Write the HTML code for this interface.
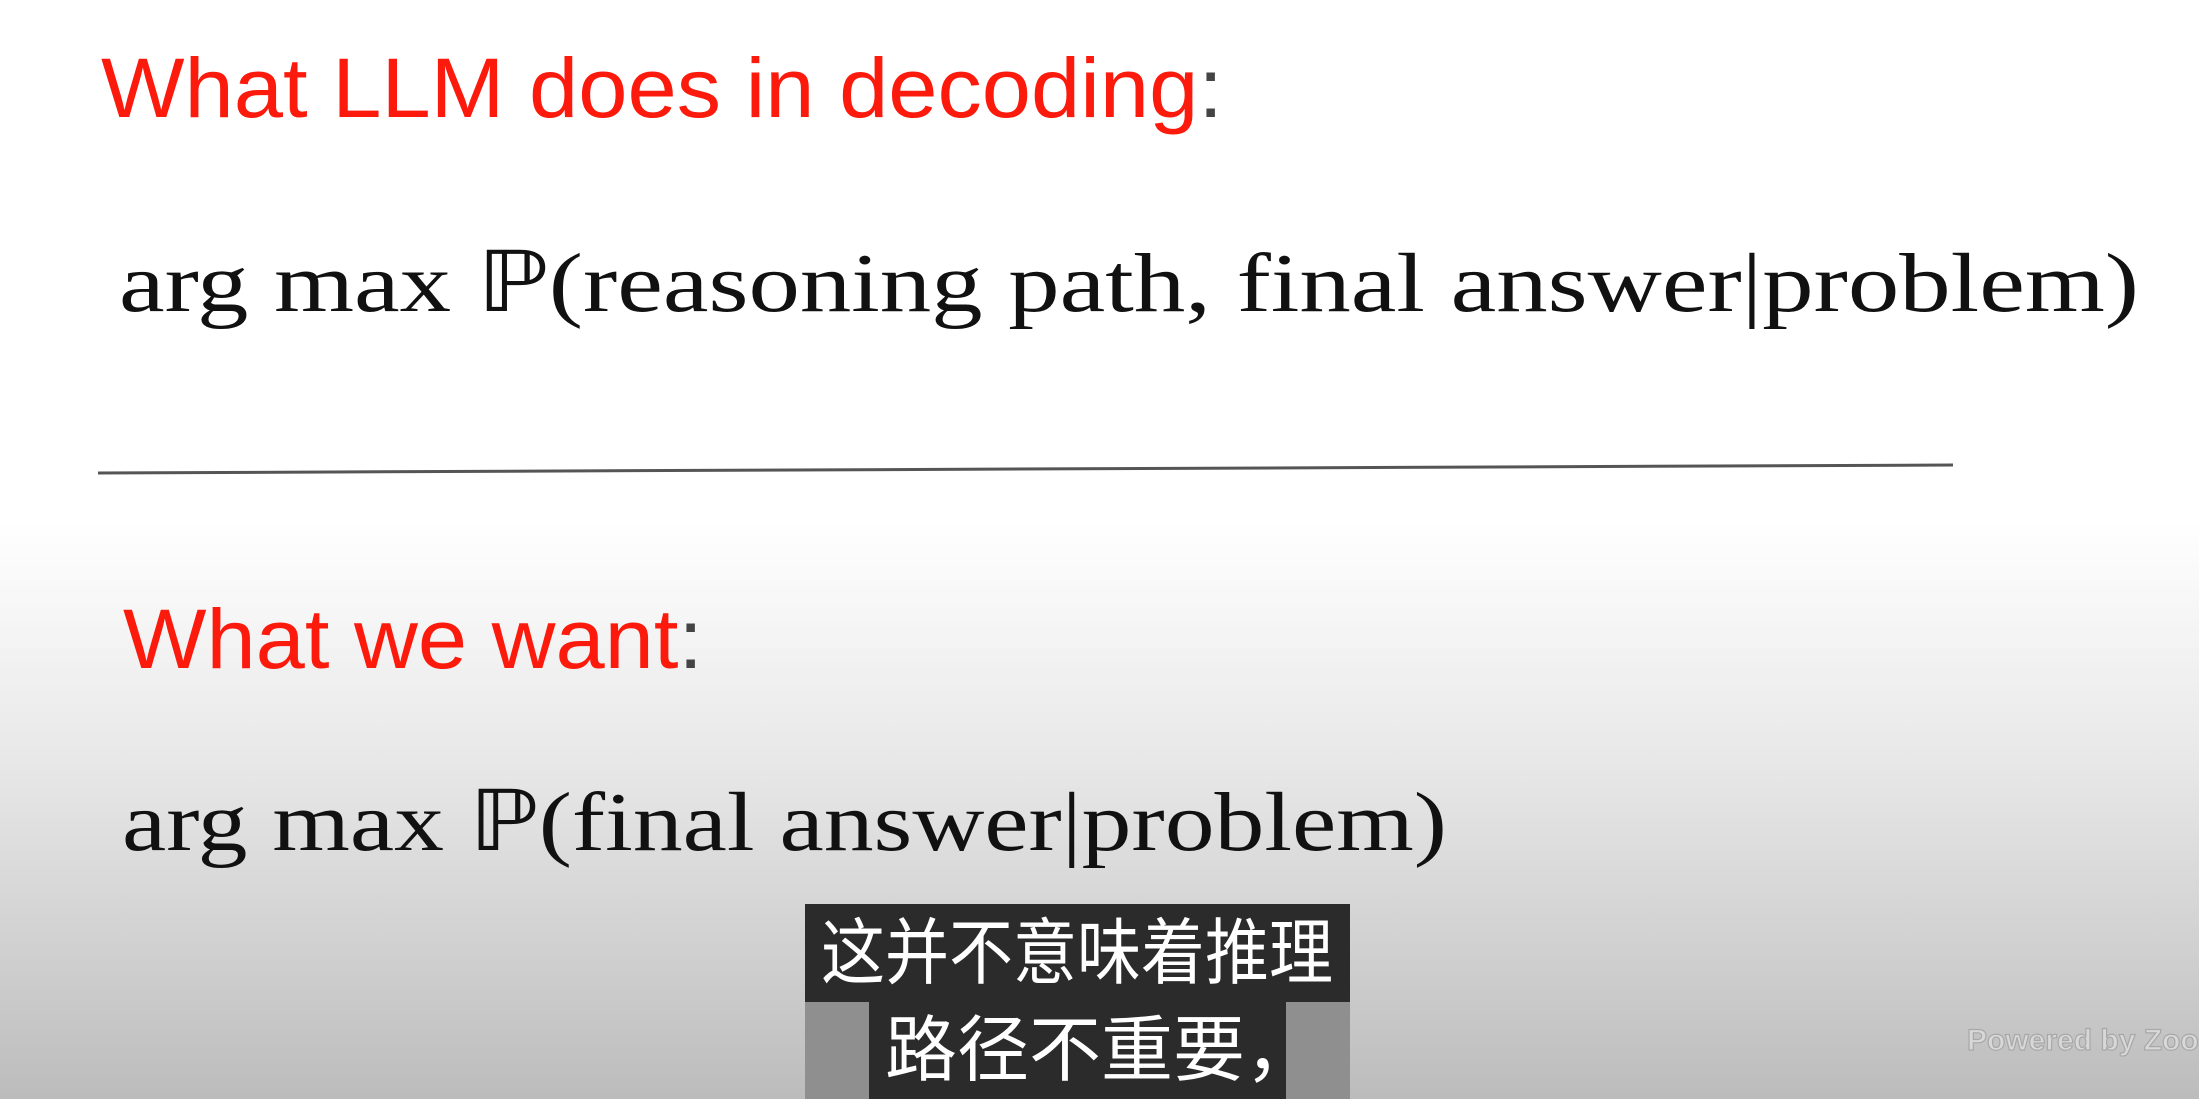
<!DOCTYPE html>
<html><head><meta charset="utf-8"><style>
html,body{margin:0;padding:0;width:2199px;height:1099px;overflow:hidden;}
body{background:linear-gradient(to bottom,#ffffff 0px,#ffffff 520px,#e8e8e8 760px,#d0d0d0 950px,#bcbcbc 1099px);}
svg{position:absolute;left:0;top:0;}
</style></head><body>
<svg width="2199" height="1099" xmlns="http://www.w3.org/2000/svg">
<text x="101" y="117" font-family="Liberation Sans, sans-serif" font-size="84" fill="#fb1a0c" textLength="1122" lengthAdjust="spacingAndGlyphs">What LLM does in decoding<tspan fill="#444">:</tspan></text>
<text x="119" y="311" font-family="Liberation Serif, serif" font-size="84" fill="#111" textLength="2020" lengthAdjust="spacingAndGlyphs">arg max ℙ(reasoning path, final answer|problem)</text>
<line x1="98" y1="473" x2="1953" y2="465" stroke="#555" stroke-width="3"/>
<text x="123" y="668" font-family="Liberation Sans, sans-serif" font-size="84" fill="#fb1a0c" textLength="580" lengthAdjust="spacingAndGlyphs">What we want<tspan fill="#444">:</tspan></text>
<text x="122" y="850" font-family="Liberation Serif, serif" font-size="84" fill="#111" textLength="1325" lengthAdjust="spacingAndGlyphs">arg max ℙ(final answer|problem)</text>
<rect x="805" y="1002" width="545" height="97" fill="#8f8f8f"/>
<rect x="805" y="904" width="545" height="98" fill="#2b2b2b"/>
<rect x="869" y="1000" width="417" height="99" fill="#2b2b2b"/>
<text x="1077" y="978" text-anchor="middle" font-family="Noto Sans CJK SC, sans-serif" font-size="72" fill="#fff" textLength="512" lengthAdjust="spacingAndGlyphs">这并不意味着推理</text>
<text x="885" y="1075" font-family="Noto Sans CJK SC, sans-serif" font-size="72" fill="#fff">路径不重要，</text>
<text x="1967" y="1050" font-family="Liberation Sans, sans-serif" font-weight="bold" font-size="30" fill="#d8d8d8" stroke="#a8a8a8" stroke-width="1.2">Powered by Zoom</text>
</svg>
</body></html>
